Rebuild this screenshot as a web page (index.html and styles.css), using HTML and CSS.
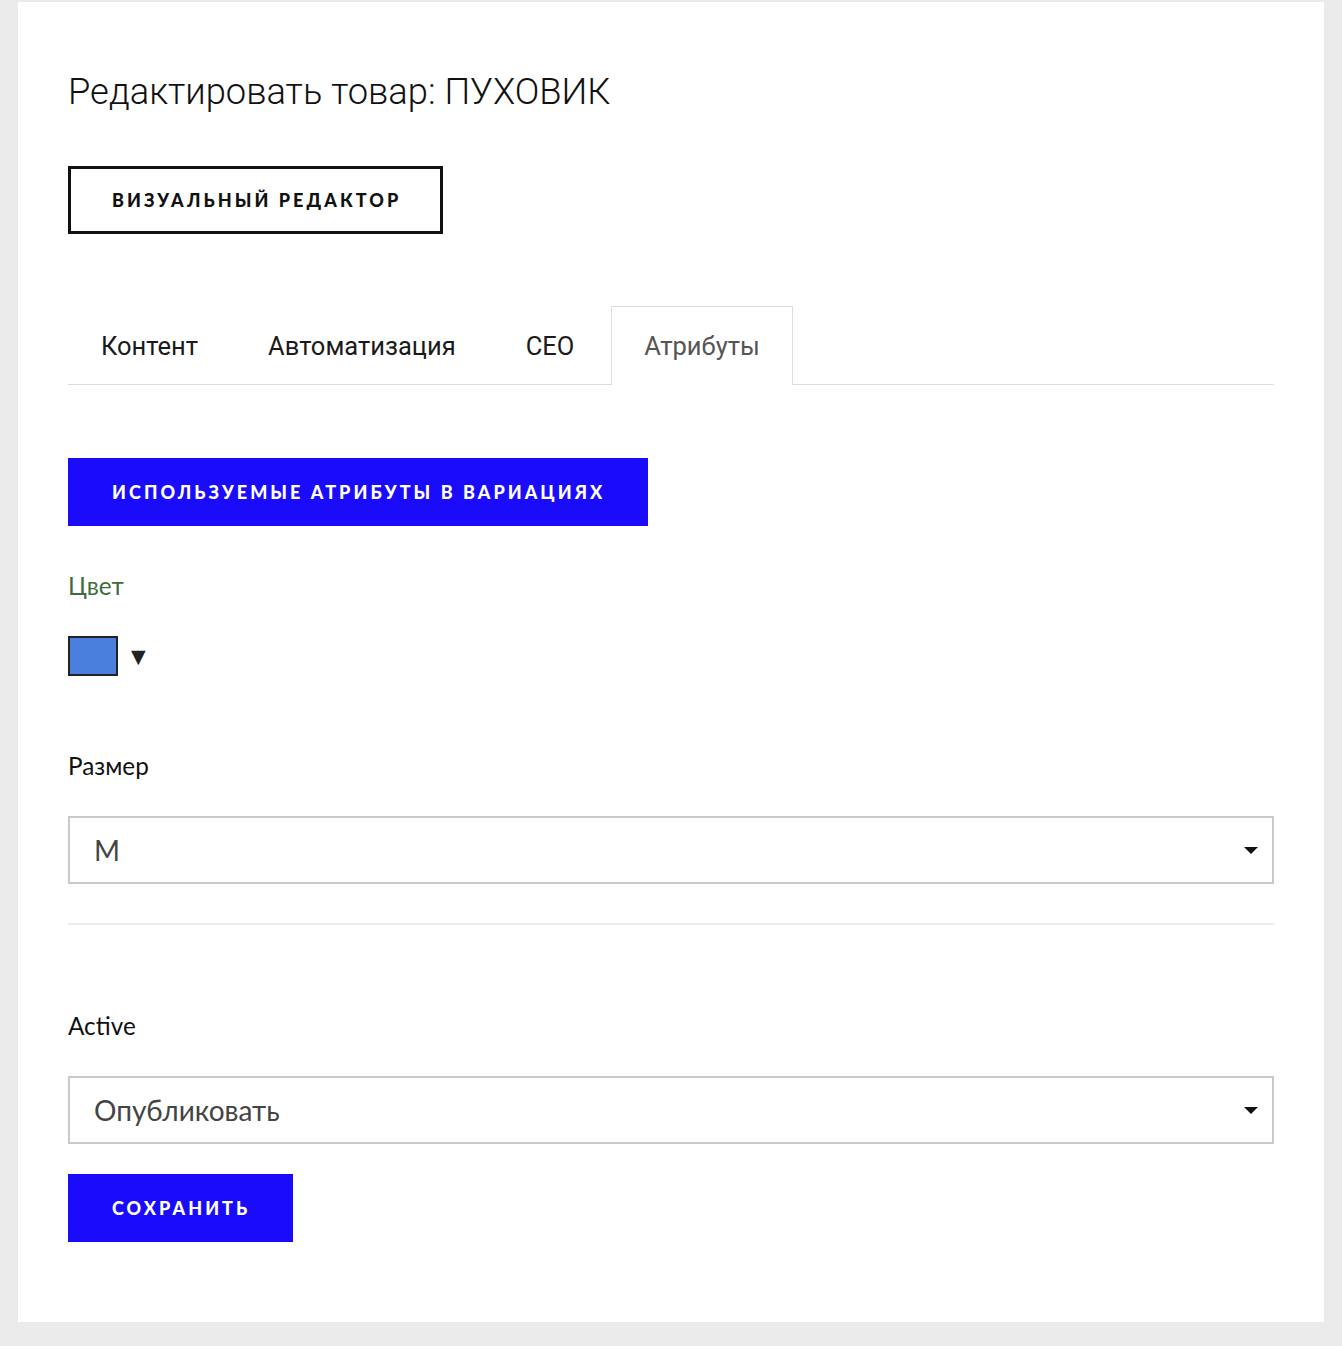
FILE: index.html
```html
<!DOCTYPE html>
<html lang="ru">
<head>
<meta charset="utf-8">
<title>Редактировать товар</title>
<link rel="stylesheet" href="styles.css">
</head>
<body>
<div class="card">
  <h1 class="title">Редактировать товар: ПУХОВИК</h1>
  <button class="btn-outline">ВИЗУАЛЬНЫЙ РЕДАКТОР</button>
  <div class="tabs">
    <div class="tab">Контент</div>
    <div class="tab">Автоматизация</div>
    <div class="tab">СЕО</div>
    <div class="tab active">Атрибуты</div>
  </div>
  <button class="btn-primary btn-attrs">ИСПОЛЬЗУЕМЫЕ АТРИБУТЫ В ВАРИАЦИЯХ</button>
  <div class="label label-green">Цвет</div>
  <div class="color-row">
    <span class="swatch"></span>
    <span class="swatch-arrow">▼</span>
  </div>
  <div class="label label-size">Размер</div>
  <div class="select">
    <span class="select-value">M</span>
    <span class="caret"></span>
  </div>
  <div class="divider"></div>
  <div class="label label-active">Active</div>
  <div class="select">
    <span class="select-value">Опубликовать</span>
    <span class="caret"></span>
  </div>
  <button class="btn-primary btn-save">СОХРАНИТЬ</button>
</div>
</body>
</html>
```

FILE: styles.css
```css
html, body {
  margin: 0;
  padding: 0;
}
body {
  background: #ebebeb;
  font-family: "Lato", "Open Sans", sans-serif;
  color: #111;
}
.card {
  background: #fff;
  margin: 2px 18px 24px;
  padding: 68px 50px 80px;
  display: flex;
  flex-direction: column;
  align-items: flex-start;
}
.title {
  margin: 0;
  font-family: "Roboto", sans-serif;
  font-weight: 300;
  font-size: 36.3px;
  line-height: 44px;
  color: #111;
  letter-spacing: 0;
}
.btn-outline, .btn-primary {
  box-sizing: border-box;
  height: 68px;
  display: inline-flex;
  align-items: center;
  font-family: "Lato", sans-serif;
  font-weight: 900;
  font-size: 18px;
  letter-spacing: 3.05px;
  cursor: pointer;
}
.btn-outline {
  margin-top: 52px;
  border: 3px solid #111;
  background: #fff;
  color: #111;
  padding: 0 39px 0 41px;
}
.btn-primary {
  border: none;
  background: #1a0bfb;
  color: #fff;
  padding: 0 43px 0 44px;
}
.tabs {
  margin-top: 72px;
  align-self: stretch;
  display: flex;
  align-items: flex-end;
  gap: 4px;
  border-bottom: 1px solid #ddd;
}
.tab {
  box-sizing: border-box;
  height: 78px;
  padding: 0 32px;
  display: flex;
  align-items: center;
  font-family: "Roboto", sans-serif;
  font-size: 25.5px;
  color: #1a1a1a;
  border: 1px solid transparent;
  border-bottom: none;
}
.tab.active {
  height: 79px;
  margin-bottom: -1px;
  padding-bottom: 1px;
  background: #fff;
  border-color: #ddd;
  color: #555;
}
.btn-attrs {
  margin-top: 73px;
}
.label {
  font-size: 24.3px;
  line-height: 30px;
  color: #111;
}
.label-green {
  margin-top: 45px;
  color: #3d6d3d;
}
.color-row {
  margin-top: 35px;
  height: 40px;
  display: flex;
  align-items: center;
  gap: 13px;
}
.swatch {
  box-sizing: border-box;
  width: 50px;
  height: 40px;
  background: #4a7fde;
  border: 2px solid #222;
}
.swatch-arrow {
  font-family: "DejaVu Sans", sans-serif;
  font-size: 19px;
  color: #222;
  line-height: 1;
}
.label-size {
  margin-top: 75px;
}
.select {
  box-sizing: border-box;
  margin-top: 35px;
  align-self: stretch;
  height: 68px;
  border: 2px solid #c9c9c9;
  display: flex;
  align-items: center;
  justify-content: space-between;
  padding: 0 14px 0 24px;
}
.select-value {
  font-size: 28px;
  color: #444;
}
.caret {
  width: 0;
  height: 0;
  border-left: 7px solid transparent;
  border-right: 7px solid transparent;
  border-top: 7px solid #111;
}
.divider {
  margin-top: 39px;
  align-self: stretch;
  height: 2px;
  background: #ececec;
}
.label-active {
  margin-top: 86px;
}
.btn-save {
  margin-top: 30px;
}
```
